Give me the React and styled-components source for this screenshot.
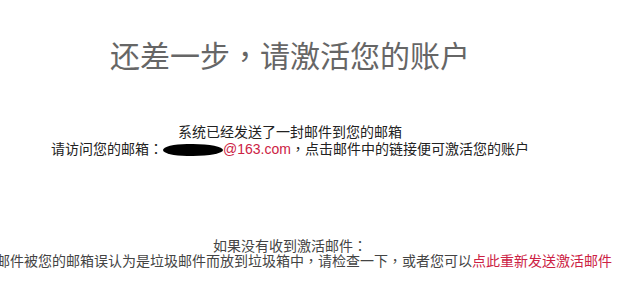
import React from "react";
import styled, { createGlobalStyle } from "styled-components";

const Global = createGlobalStyle`
  html, body { margin: 0; padding: 0; background: #fff; overflow: hidden; }
  body { font-family: "Liberation Sans", "Noto Sans CJK SC", sans-serif; }
`;

const Page = styled.div`
  width: 580px;
  display: flex;
  flex-direction: column;
  align-items: center;
  padding-top: 34px;
`;

const Title = styled.h1`
  margin: 0;
  font-family: "Noto Sans CJK SC", sans-serif;
  font-size: 30px;
  line-height: 40px;
  font-weight: normal;
  color: #666;
  white-space: nowrap;
`;

const Block = styled.div`
  display: flex;
  flex-direction: column;
  align-items: center;
  margin-top: ${(p) => p.$gap}px;
`;

const Line = styled.p`
  margin: 0;
  font-size: 14px;
  line-height: ${(p) => p.$lh || 16}px;
  color: ${(p) => p.$color || "#222"};
  white-space: nowrap;
`;

const Punct = styled.span`
  font-family: "Noto Sans CJK TC", sans-serif;
`;

const Red = styled.span`
  color: #cc2244;
`;

const Redacted = styled.span`
  display: inline-block;
  width: 60px;
  height: 12px;
  vertical-align: -2px;
  background: #000;
  border-radius: 40% 50% 50% 40% / 50%;
`;

export default function App() {
  return (
    <>
      <Global />
      <Page>
        <Title>
          还差一步<Punct>，</Punct>请激活您的账户
        </Title>
        <Block $gap={50}>
          <Line>系统已经发送了一封邮件到您的邮箱</Line>
          <Line>
            请访问您的邮箱<Punct>：</Punct>
            <Redacted />
            <Red>@163.com</Red>
            <Punct>，</Punct>点击邮件中的链接便可激活您的账户
          </Line>
        </Block>
        <Block $gap={81}>
          <Line $color="#444" $lh={14}>
            如果没有收到激活邮件<Punct>：</Punct>
          </Line>
          <Line $color="#444" $lh={14}>
            可能邮件被您的邮箱误认为是垃圾邮件而放到垃圾箱中<Punct>，</Punct>请检查一下
            <Punct>，</Punct>或者您可以
            <Red>点此重新发送激活邮件</Red>
          </Line>
        </Block>
      </Page>
    </>
  );
}
